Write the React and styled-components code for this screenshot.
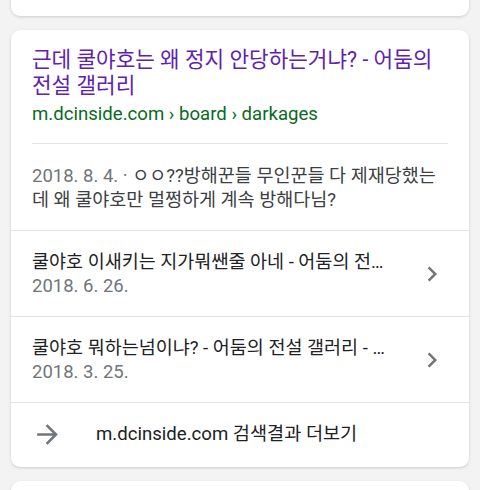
import React from 'react';
import styled, { createGlobalStyle } from 'styled-components';

const GlobalStyle = createGlobalStyle`
  html, body {
    margin: 0;
    padding: 0;
    background: #f3f3f3;
    font-family: Roboto, "Noto Sans CJK KR", sans-serif;
  }
`;

const Page = styled.div`
  width: 480px;
  height: 490px;
  overflow: hidden;
`;

const List = styled.div`
  display: flex;
  flex-direction: column;
  gap: 14px;
  padding: 0 11px;
  margin-top: -24px;
`;

const Card = styled.div`
  background: #fff;
  border-radius: 9px;
  box-shadow: 0 1px 3px rgba(0, 0, 0, 0.16);
  height: ${p => (p.stub ? '40px' : 'auto')};
  overflow: hidden;
`;

const Header = styled.div`
  padding: 17px 21px 17px;
`;

const Title = styled.a`
  display: block;
  color: #5f22ae;
  font-size: 21.3px;
  line-height: 26px;
  text-decoration: none;
`;

const Url = styled.div`
  color: #0a6a22;
  font-size: 18.6px;
  line-height: 24px;
  margin-top: 3px;
`;

const Divider = styled.div`
  height: 1px;
  background: #e3e3e3;
  margin: ${p => (p.inset ? '0 21px' : '0')};
`;

const Snippet = styled.div`
  padding: 20px 21px 18px;
  color: #3c4043;
  font-size: 18.5px;
  line-height: 24px;
`;

const Date = styled.span`
  color: #70757a;
`;

const Row = styled.div`
  display: flex;
  align-items: center;
  padding: 19px 22px 18px 21px;
`;

const RowText = styled.div`
  flex: 1;
  min-width: 0;
  margin-right: 27px;
`;

const RowTitle = styled.div`
  color: #202124;
  font-size: 18.5px;
  line-height: 24px;
  white-space: nowrap;
  overflow: hidden;
  text-overflow: ellipsis;
`;

const RowDate = styled.div`
  color: #70757a;
  font-size: 18.5px;
  line-height: 24px;
`;

const Icon = styled.svg`
  width: ${p => p.size}px;
  height: ${p => p.size}px;
  flex-shrink: 0;
  fill: #70757a;
`;

const Footer = styled.div`
  display: flex;
  align-items: center;
  height: 64px;
  padding: 0 21px;
  padding-bottom: 2px;
  box-sizing: border-box;
`;

const FooterText = styled.span`
  color: #202124;
  font-size: 18.6px;
  line-height: 24px;
  margin-left: 33px;
`;

const Chevron = () => (
  <Icon size={30} viewBox="0 0 24 24">
    <path d="M10 6L8.59 7.41 13.17 12l-4.58 4.59L10 18l6-6z" />
  </Icon>
);

const Arrow = () => (
  <Icon size={31} viewBox="0 0 24 24">
    <path d="M12 4l-1.41 1.41L16.17 11H4v2h12.17l-5.58 5.59L12 20l8-8z" />
  </Icon>
);

const rows = [
  { title: '쿨야호 이새키는 지가뭐쌘줄 아네 - 어둠의 전설 갤러리', date: '2018. 6. 26.' },
  { title: '쿨야호 뭐하는넘이냐? - 어둠의 전설 갤러리 - 디시인사이드', date: '2018. 3. 25.' },
];

const App = () => (
  <Page>
    <GlobalStyle />
    <List>
      <Card stub />
      <Card>
        <Header>
          <Title href="#">근데 쿨야호는 왜 정지 안당하는거냐? - 어둠의 전설 갤러리</Title>
          <Url>m.dcinside.com › board › darkages</Url>
        </Header>
        <Divider inset />
        <Snippet>
          <Date>2018. 8. 4. · </Date>ㅇㅇ??방해꾼들 무인꾼들 다 제재당했는데 왜 쿨야호만 멀쩡하게 계속 방해다님?
        </Snippet>
        {rows.map(row => (
          <React.Fragment key={row.date}>
            <Divider />
            <Row>
              <RowText>
                <RowTitle>{row.title}</RowTitle>
                <RowDate>{row.date}</RowDate>
              </RowText>
              <Chevron />
            </Row>
          </React.Fragment>
        ))}
        <Divider />
        <Footer>
          <Arrow />
          <FooterText>m.dcinside.com 검색결과 더보기</FooterText>
        </Footer>
      </Card>
      <Card stub />
    </List>
  </Page>
);

export default App;
